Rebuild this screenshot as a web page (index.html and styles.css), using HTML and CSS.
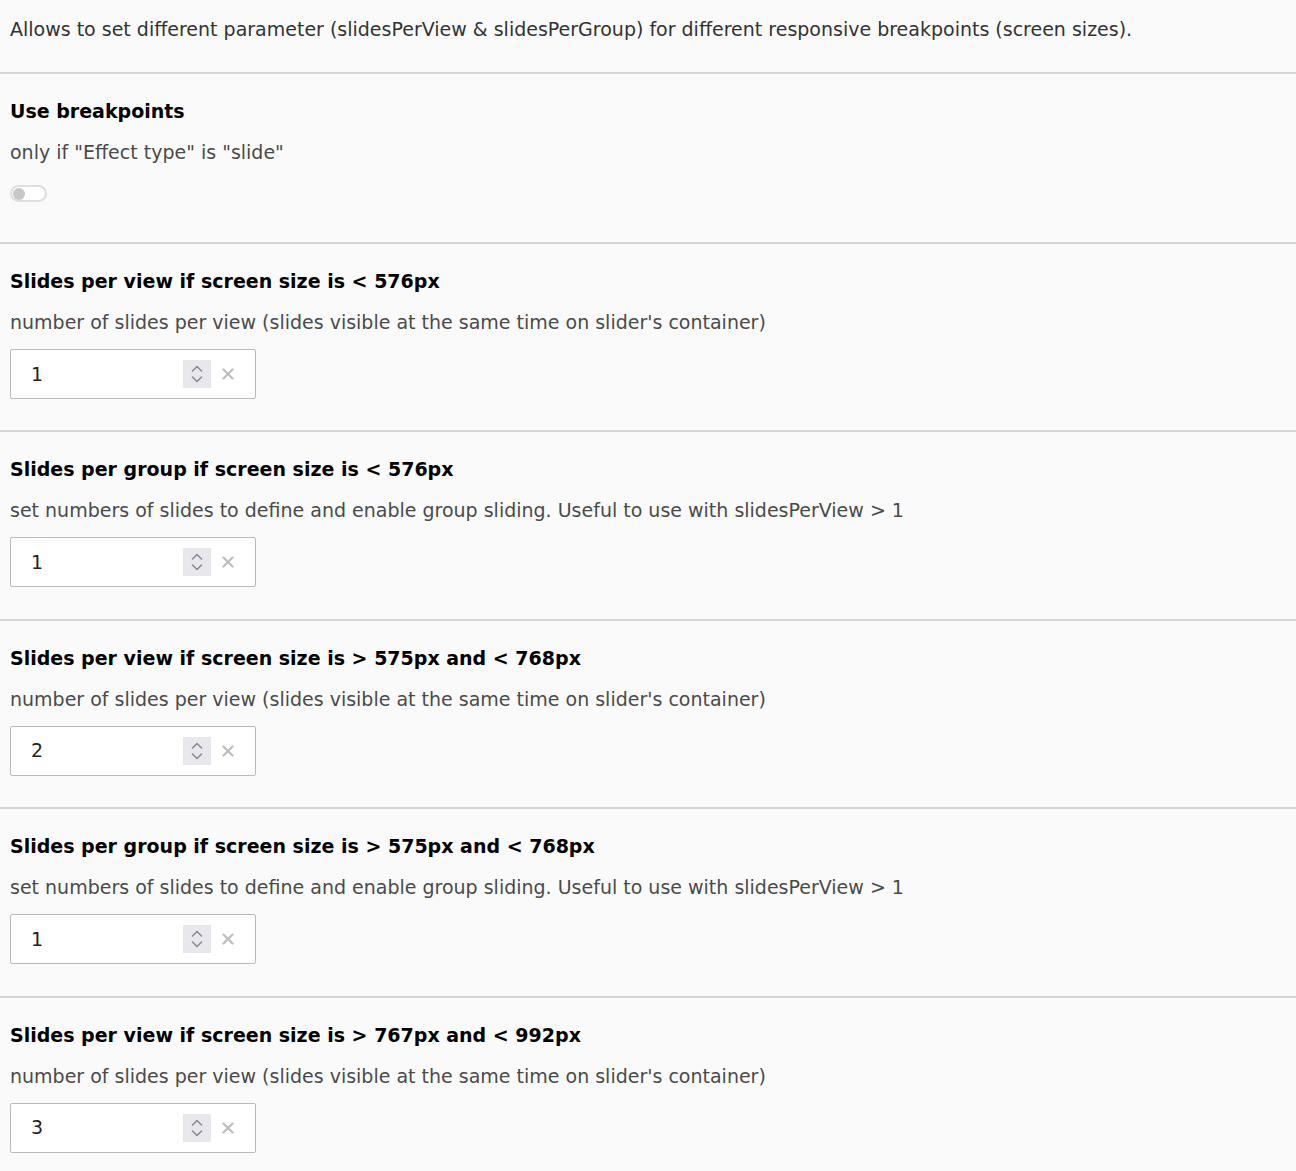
FILE: index.html
```html
<!DOCTYPE html>
<html>
<head>
<meta charset="utf-8">
<link rel="stylesheet" href="styles.css">
</head>
<body>
<div class="intro">Allows to set different parameter (slidesPerView &amp; slidesPerGroup) for different responsive breakpoints (screen sizes).</div>

<div class="section section-toggle">
  <div class="title">Use breakpoints</div>
  <div class="desc">only if "Effect type" is "slide"</div>
  <div class="toggle"><span class="knob"></span></div>
</div>

<div class="section">
  <div class="title">Slides per view if screen size is &lt; 576px</div>
  <div class="desc">number of slides per view (slides visible at the same time on slider's container)</div>
  <div class="input"><span class="value">1</span><span class="spin"><svg width="14" height="22" viewBox="0 0 14 22"><path d="M2.5 8 L7 3.5 L11.5 8" fill="none" stroke="#8b8b98" stroke-width="1.6" stroke-linecap="round" stroke-linejoin="round"/><path d="M2.5 14 L7 18.5 L11.5 14" fill="none" stroke="#8b8b98" stroke-width="1.6" stroke-linecap="round" stroke-linejoin="round"/></svg></span><span class="clear"><svg width="12" height="12" viewBox="0 0 12 12"><path d="M1.5 1.5 L10.5 10.5 M10.5 1.5 L1.5 10.5" stroke="#bdbdbd" stroke-width="2.2" stroke-linecap="round"/></svg></span></div>
</div>

<div class="section">
  <div class="title">Slides per group if screen size is &lt; 576px</div>
  <div class="desc">set numbers of slides to define and enable group sliding. Useful to use with slidesPerView &gt; 1</div>
  <div class="input"><span class="value">1</span><span class="spin"><svg width="14" height="22" viewBox="0 0 14 22"><path d="M2.5 8 L7 3.5 L11.5 8" fill="none" stroke="#8b8b98" stroke-width="1.6" stroke-linecap="round" stroke-linejoin="round"/><path d="M2.5 14 L7 18.5 L11.5 14" fill="none" stroke="#8b8b98" stroke-width="1.6" stroke-linecap="round" stroke-linejoin="round"/></svg></span><span class="clear"><svg width="12" height="12" viewBox="0 0 12 12"><path d="M1.5 1.5 L10.5 10.5 M10.5 1.5 L1.5 10.5" stroke="#bdbdbd" stroke-width="2.2" stroke-linecap="round"/></svg></span></div>
</div>

<div class="section">
  <div class="title">Slides per view if screen size is &gt; 575px and &lt; 768px</div>
  <div class="desc">number of slides per view (slides visible at the same time on slider's container)</div>
  <div class="input"><span class="value">2</span><span class="spin"><svg width="14" height="22" viewBox="0 0 14 22"><path d="M2.5 8 L7 3.5 L11.5 8" fill="none" stroke="#8b8b98" stroke-width="1.6" stroke-linecap="round" stroke-linejoin="round"/><path d="M2.5 14 L7 18.5 L11.5 14" fill="none" stroke="#8b8b98" stroke-width="1.6" stroke-linecap="round" stroke-linejoin="round"/></svg></span><span class="clear"><svg width="12" height="12" viewBox="0 0 12 12"><path d="M1.5 1.5 L10.5 10.5 M10.5 1.5 L1.5 10.5" stroke="#bdbdbd" stroke-width="2.2" stroke-linecap="round"/></svg></span></div>
</div>

<div class="section">
  <div class="title">Slides per group if screen size is &gt; 575px and &lt; 768px</div>
  <div class="desc">set numbers of slides to define and enable group sliding. Useful to use with slidesPerView &gt; 1</div>
  <div class="input"><span class="value">1</span><span class="spin"><svg width="14" height="22" viewBox="0 0 14 22"><path d="M2.5 8 L7 3.5 L11.5 8" fill="none" stroke="#8b8b98" stroke-width="1.6" stroke-linecap="round" stroke-linejoin="round"/><path d="M2.5 14 L7 18.5 L11.5 14" fill="none" stroke="#8b8b98" stroke-width="1.6" stroke-linecap="round" stroke-linejoin="round"/></svg></span><span class="clear"><svg width="12" height="12" viewBox="0 0 12 12"><path d="M1.5 1.5 L10.5 10.5 M10.5 1.5 L1.5 10.5" stroke="#bdbdbd" stroke-width="2.2" stroke-linecap="round"/></svg></span></div>
</div>

<div class="section">
  <div class="title">Slides per view if screen size is &gt; 767px and &lt; 992px</div>
  <div class="desc">number of slides per view (slides visible at the same time on slider's container)</div>
  <div class="input"><span class="value">3</span><span class="spin"><svg width="14" height="22" viewBox="0 0 14 22"><path d="M2.5 8 L7 3.5 L11.5 8" fill="none" stroke="#8b8b98" stroke-width="1.6" stroke-linecap="round" stroke-linejoin="round"/><path d="M2.5 14 L7 18.5 L11.5 14" fill="none" stroke="#8b8b98" stroke-width="1.6" stroke-linecap="round" stroke-linejoin="round"/></svg></span><span class="clear"><svg width="12" height="12" viewBox="0 0 12 12"><path d="M1.5 1.5 L10.5 10.5 M10.5 1.5 L1.5 10.5" stroke="#bdbdbd" stroke-width="2.2" stroke-linecap="round"/></svg></span></div>
</div>
</body>
</html>
```

FILE: styles.css
```css
html, body {
  margin: 0;
  padding: 0;
  background: #fafafa;
}
body {
  font-family: "DejaVu Sans", Verdana, sans-serif;
  font-size: 19px;
  line-height: 27px;
  color: #333;
}
.intro {
  padding: 16px 10px 29px;
  color: #333;
  border-bottom: 2px solid #d6d6d6;
}
.section {
  padding: 24px 10px 31.4px;
  border-bottom: 2px solid #d6d6d6;
}
.section-toggle {
  padding-bottom: 40px;
}
.title {
  font-weight: bold;
  color: #000;
  margin-bottom: 14px;
}
.desc {
  color: #4a4a4a;
}
.toggle {
  margin-top: 19px;
  width: 31px;
  height: 13px;
  border: 2px solid #dedede;
  border-radius: 10px;
  background: #fff;
  display: flex;
  align-items: center;
  padding: 0 1px;
}
.knob {
  width: 12px;
  height: 12px;
  border-radius: 50%;
  background: #c8c8c8;
}
.input {
  margin-top: 13px;
  width: 244px;
  height: 48px;
  border: 1px solid #bbb;
  border-radius: 2px;
  background: #fff;
  display: flex;
  align-items: center;
  box-sizing: content-box;
}
.value {
  flex: 1;
  padding-left: 20px;
  color: #222;
}
.spin {
  width: 28px;
  height: 28px;
  background: #e8e8ec;
  display: flex;
  align-items: center;
  justify-content: center;
}
.clear {
  width: 34px;
  margin-right: 10px;
  display: flex;
  align-items: center;
  justify-content: center;
}
```
